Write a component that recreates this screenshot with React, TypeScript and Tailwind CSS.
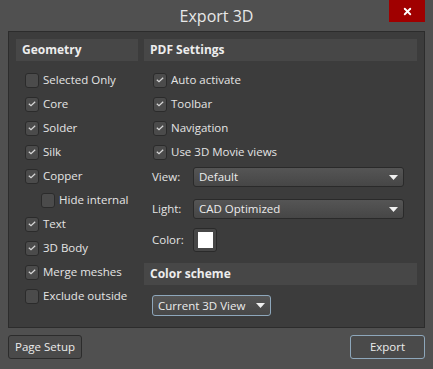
import { X } from 'lucide-react';

const font = { fontFamily: '"Open Sans", "Noto Sans", sans-serif' };

function Check({ label, checked, indent }: { label: string; checked?: boolean; indent?: boolean }) {
  return (
    <div className={`flex items-center h-[24px] gap-[4px] ${indent ? 'pl-[25px]' : 'pl-[9px]'}`}>
      <span className="w-[14px] h-[15px] rounded-[3px] border border-[#2b2b2b] bg-[#4b4b4b] flex items-center justify-center shrink-0">
        {checked && (
          <svg width="8" height="6" viewBox="0 0 8 6">
            <path d="M0.8 2.8 L3 4.8 L7.2 0.8" fill="none" stroke="#d8d8d8" strokeWidth="1.2" />
          </svg>
        )}
      </span>
      <span className="text-[11.5px] text-[#e4e4e4] leading-none">{label}</span>
    </div>
  );
}

function Arrow() {
  return (
    <svg width="9" height="5" viewBox="0 0 9 5" className="shrink-0">
      <path d="M0 0 H9 L4.5 5 Z" fill="#f0f0f0" />
    </svg>
  );
}

function Select({ value }: { value: string }) {
  return (
    <div className="w-[211px] h-[20px] rounded-[3px] border border-[#2a2a2a] bg-gradient-to-b from-[#555555] to-[#464646] flex items-center justify-between pl-[5px] pr-[5px]">
      <span className="text-[11.5px] text-[#ececec] leading-none">{value}</span>
      <Arrow />
    </div>
  );
}

export default function App() {
  return (
    <div className="w-[433px] h-[369px] bg-[#505050] flex flex-col select-none" style={font}>
      <div className="relative h-[31px] flex items-center justify-center">
        <span className="text-[16px] text-[#e8e8e8] pt-[1px]">Export 3D</span>
        <div className="absolute top-0 right-[8px] w-[36px] h-[22px] bg-[#a00000] flex items-center justify-center">
          <X size={11} strokeWidth={4} color="#ffffff" />
        </div>
      </div>

      <div className="mx-[8px] h-[297px] border border-[#2c2c2c] bg-[#3c3c3c] p-[7px] flex gap-[6px]">
        <div className="w-[122px] flex flex-col">
          <div className="h-[22px] bg-[#474747] flex items-center pl-[6px] text-[12px] font-bold text-[#ededed]">Geometry</div>
          <div className="mt-[7px] flex flex-col">
            <Check label="Selected Only" />
            <Check label="Core" checked />
            <Check label="Solder" checked />
            <Check label="Silk" checked />
            <Check label="Copper" checked />
            <Check label="Hide internal" indent />
            <Check label="Text" checked />
            <Check label="3D Body" checked />
            <Check label="Merge meshes" checked />
            <Check label="Exclude outside" />
          </div>
        </div>

        <div className="flex-1 flex flex-col">
          <div className="h-[22px] bg-[#474747] flex items-center pl-[6px] text-[12px] font-bold text-[#ededed]">PDF Settings</div>
          <div className="mt-[7px] flex flex-col">
            <Check label="Auto activate" checked />
            <Check label="Toolbar" checked />
            <Check label="Navigation" checked />
            <Check label="Use 3D Movie views" checked />
          </div>
          <div className="mt-[3px] flex items-center pl-[8px]">
            <span className="w-[41px] text-[11.5px] text-[#e4e4e4]">View:</span>
            <Select value="Default" />
          </div>
          <div className="mt-[12px] flex items-center pl-[8px]">
            <span className="w-[41px] text-[11.5px] text-[#e4e4e4]">Light:</span>
            <Select value="CAD Optimized" />
          </div>
          <div className="mt-[9px] flex items-center pl-[8px]">
            <span className="w-[41px] text-[11.5px] text-[#e4e4e4]">Color:</span>
            <div className="w-[24px] h-[24px] rounded-[3px] border border-[#2a2a2a] bg-[#474747] flex items-center justify-center">
              <div className="w-[15px] h-[16px] bg-white" />
            </div>
          </div>
          <div className="mt-[11px] h-[22px] bg-[#474747] flex items-center pl-[6px] text-[12px] font-bold text-[#ededed]">Color scheme</div>
          <div className="mt-[10px] ml-[8px] w-[119px] h-[21px] rounded-[3px] border border-[#8ea7bb] bg-gradient-to-b from-[#555555] to-[#474747] flex items-center justify-between pl-[5px] pr-[5px]">
            <span className="text-[11.5px] text-[#ececec] leading-none">Current 3D View</span>
            <Arrow />
          </div>
        </div>
      </div>

      <div className="mt-[7px] mx-[8px] flex justify-between">
        <button className="w-[74px] h-[24px] rounded-[3px] border border-[#2c2c2c] bg-[#4a4a4a] text-[11.5px] text-[#ececec]">Page Setup</button>
        <button className="w-[75px] h-[24px] rounded-[3px] border border-[#8ea7bb] bg-[#4a4a4a] text-[11.5px] text-[#ececec]">Export</button>
      </div>
    </div>
  );
}
